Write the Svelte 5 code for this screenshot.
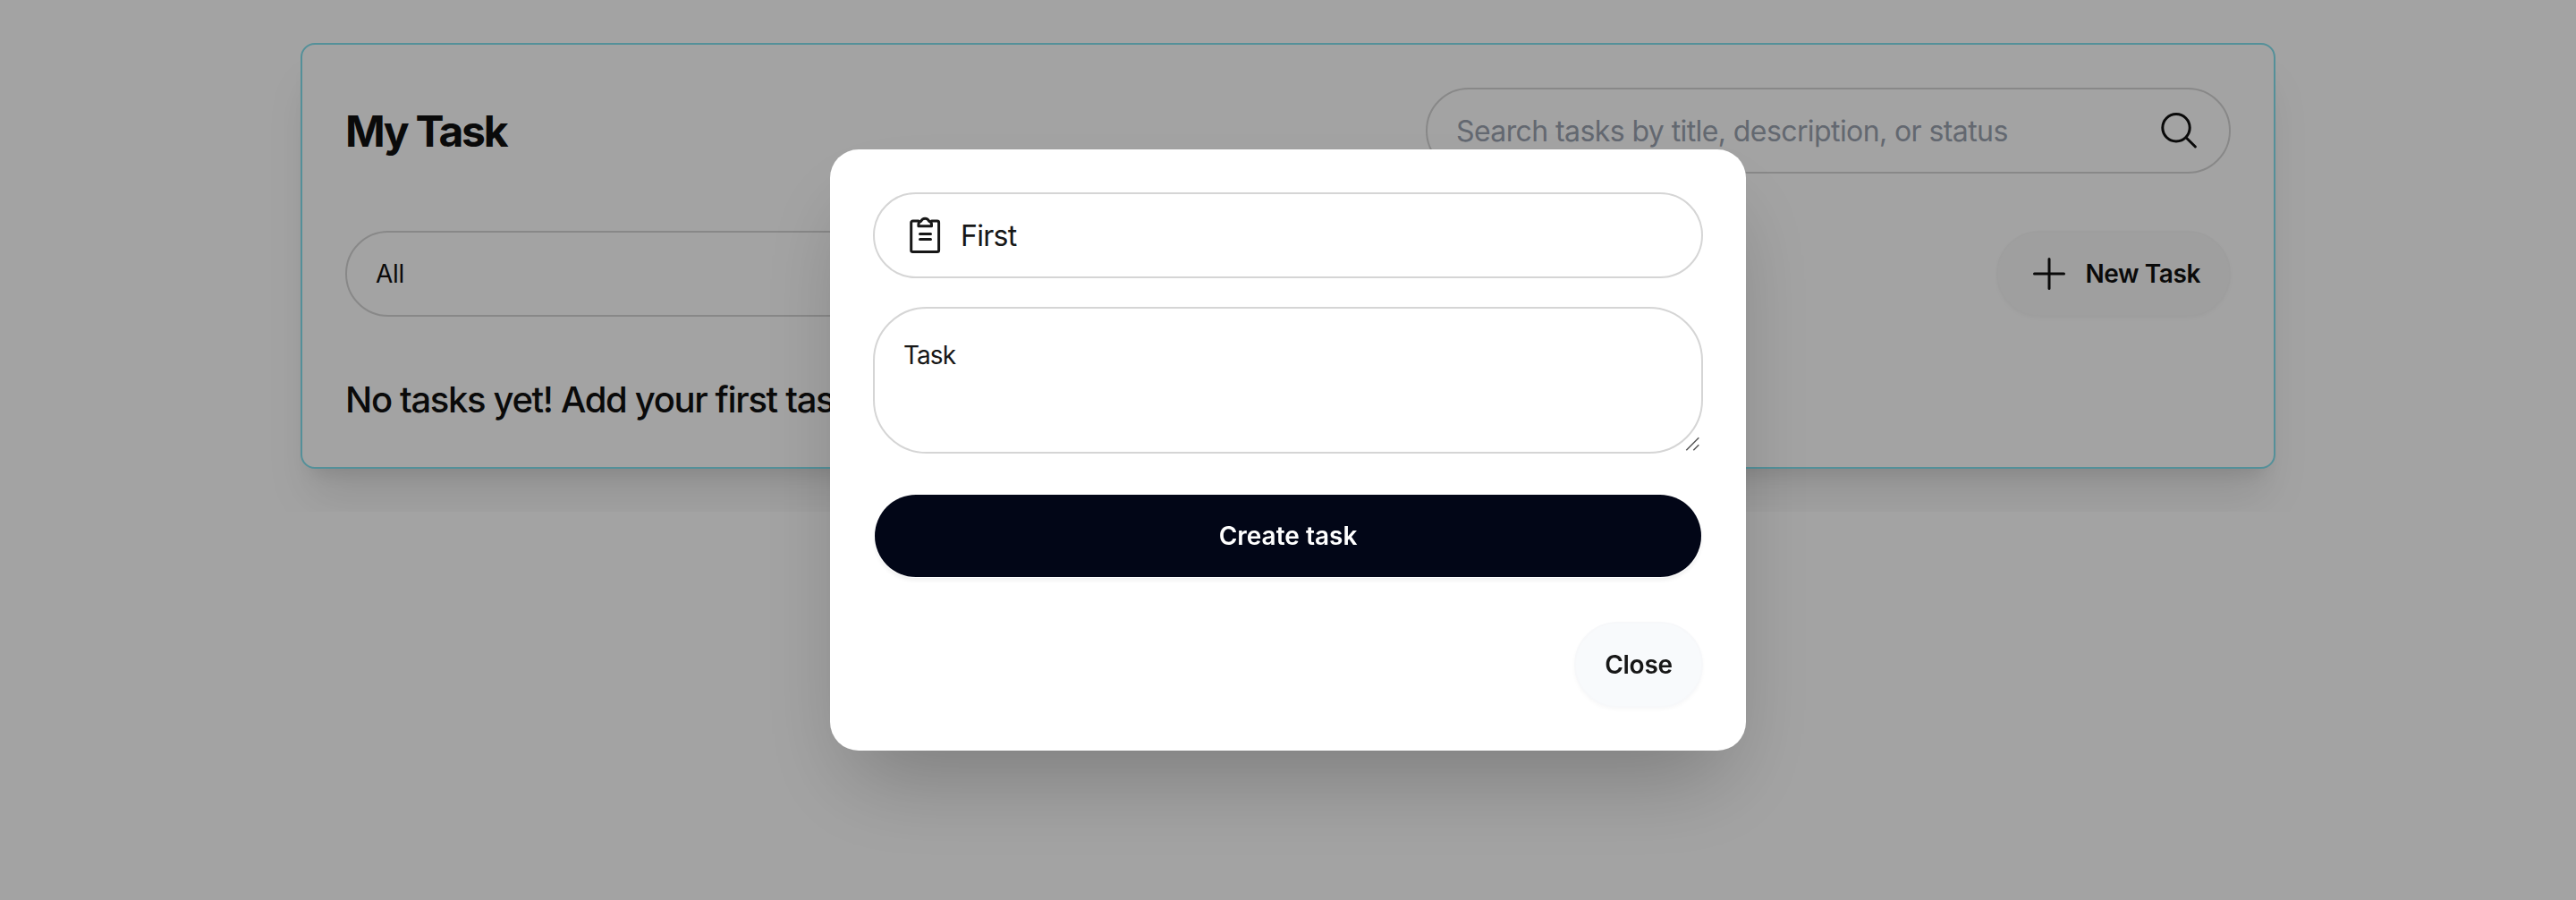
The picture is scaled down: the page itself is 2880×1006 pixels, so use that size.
<script>
  let search = $state('');
  let filter = 'All';
  let title = $state('First');
  let description = $state('Task');
</script>

<main class="page">
  <section class="card">
    <header class="row">
      <h1>My Task</h1>
      <label class="field search">
        <input bind:value={search} placeholder="Search tasks by title, description, or status" />
        <svg class="icon" viewBox="0 0 50 50">
          <circle cx="23" cy="21.7" r="15.2" />
          <path d="M34 32.7 44.4 43" />
        </svg>
      </label>
    </header>
    <div class="row">
      <div class="field select"><span>{filter}</span></div>
      <button class="btn soft">
        <svg class="icon plus" viewBox="0 0 50 50">
          <path d="M25 8.5v33M8.5 25h33" />
        </svg>
        <span class="new-label">New Task</span>
      </button>
    </div>
    <p class="empty">No tasks yet! Add your first task</p>
  </section>
</main>

<div class="backdrop">
  <div class="modal" role="dialog" aria-modal="true">
    <form class="form">
      <label class="field title">
        <svg class="icon" viewBox="0 0 50 50">
          <path d="M17 9H10.5a1.800 1.800 0 0 0-1.8 1.8V41.700a1.800 1.800 0 0 0 1.8 1.8H37.800a1.800 1.800 0 0 0 1.8-1.8V10.800a1.800 1.800 0 0 0-1.800-1.800H31.500" />
          <path d="M16.900 14.800v-1.800c0-1.900.9-3.200 2.700-3.700 1-2 2.500-3.100 4.600-3.100s3.600 1.100 4.600 3.100c1.800.5 2.700 1.800 2.700 3.700v1.800z" />
          <path d="M18.500 23.500h12M18.500 29.500h12" />
        </svg>
        <input bind:value={title} />
      </label>
      <div class="area">
        <textarea bind:value={description}></textarea>
        <svg class="grip" viewBox="0 0 16 16">
          <path d="M1.300 15.200 15.300 1.200M9.300 15.200l6-6" />
        </svg>
      </div>
      <button type="button" class="btn primary">Create task</button>
    </form>
    <div class="actions">
      <button class="btn soft close">Close</button>
    </div>
  </div>
</div>

<style>
  :global(body) {
    background: #fff;
    overflow: hidden;
  }
  .page,
  .backdrop {
    font-family: Inter, 'Liberation Sans', sans-serif;
    color: #171717;
  }
  .page {
    color: #111;
  }
  .page *,
  .backdrop * {
    box-sizing: border-box;
  }
  .page {
    padding: 48px 336px;
  }
  .card {
    display: flex;
    flex-direction: column;
    gap: 64px;
    padding: 48px;
    border: 2px solid #84e2f0;
    border-radius: 16px;
    background: #fff;
    box-shadow: 0 40px 50px -10px rgb(0 0 0 / 0.1), 0 16px 20px -12px rgb(0 0 0 / 0.1);
  }
  .row {
    display: flex;
    align-items: center;
    justify-content: space-between;
    height: 96px;
  }
  h1 {
    margin: 2px 0 0;
    font-size: 48px;
    font-weight: 700;
    line-height: 64px;
    letter-spacing: -2.35px;
  }
  .field {
    display: flex;
    align-items: center;
    gap: 15px;
    height: 96px;
    padding: 0 32px;
    border: 2px solid #d5d5d5;
    border-radius: 48px;
    background: #fff;
    font-size: 28px;
  }
  .search,
  .select {
    width: 900px;
  }
  .select {
    letter-spacing: -0.3px;
  }
  input {
    flex: 1;
    min-width: 0;
    padding: 0;
    border: 0;
    outline: 0;
    background: transparent;
    color: inherit;
    font: 400 32px Inter, 'Liberation Sans', sans-serif;
  }
  .search input {
    letter-spacing: -0.59px;
  }
  .search input::placeholder {
    color: #9ba3b0;
    opacity: 1;
  }
  .title input {
    letter-spacing: -0.7px;
    margin-left: -1px;
  }
  .icon {
    flex: none;
    width: 50px;
    height: 50px;
    fill: none;
    stroke: currentColor;
    stroke-width: 3;
    stroke-linecap: round;
    stroke-linejoin: round;
  }
  .btn {
    display: flex;
    align-items: center;
    justify-content: center;
    gap: 15px;
    height: 96px;
    padding: 0 32px;
    border: 2px solid transparent;
    border-radius: 48px;
    color: inherit;
    font: 600 28px Inter, 'Liberation Sans', sans-serif;
  }
  .soft {
    background: #f9f9f9;
    border-color: #f8f8f8;
    box-shadow: 0 2px 4px rgb(0 0 0 / 0.03);
  }
  .new-label {
    letter-spacing: -0.4px;
  }
  .close {
    width: 144px;
    border-color: #f7f8fa;
    background: #f8fafc;
    letter-spacing: -0.27px;
  }
  .empty {
    margin: 0;
    padding-top: 1px;
    height: 56px;
    font-size: 40px;
    font-weight: 540;
    line-height: 56px;
    letter-spacing: -1.35px;
  }
  .backdrop {
    position: fixed;
    inset: 0;
    display: grid;
    place-items: center;
    background: rgb(0 0 0 / 0.36);
  }
  .modal {
    width: 1024px;
    padding: 48px;
    border-radius: 32px;
    background: #fff;
    box-shadow: 0 50px 100px -24px rgb(0 0 0 / 0.25);
  }
  .form {
    display: flex;
    flex-direction: column;
  }
  .area {
    position: relative;
    height: 164px;
    margin: 32px 0 44px;
  }
  textarea {
    display: block;
    width: 100%;
    height: 100%;
    padding: 31px 32px;
    border: 2px solid #d5d5d5;
    border-radius: 60px;
    outline: 0;
    resize: none;
    overflow: hidden;
    background: #fff;
    color: inherit;
    font: 400 28px/42px Inter, 'Liberation Sans', sans-serif;
    letter-spacing: -0.95px;
  }
  .grip {
    position: absolute;
    right: 4px;
    bottom: 3px;
    width: 16px;
    height: 16px;
    fill: none;
    stroke: #555;
    stroke-width: 1.5;
  }
  .primary {
    background: #020617;
    background-clip: padding-box;
    color: #fff;
    box-shadow: 0 4px 4px -2px rgb(0 0 0 / 0.06);
  }
  .actions {
    display: flex;
    justify-content: flex-end;
    margin-top: 48px;
  }
</style>
